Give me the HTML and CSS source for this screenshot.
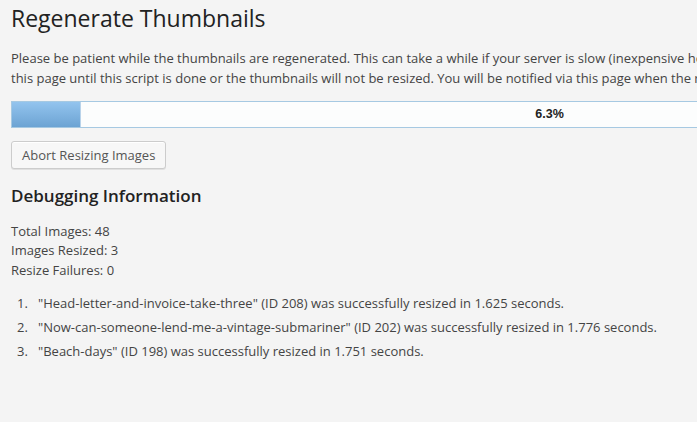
FILE: index.html
```html
<!DOCTYPE html>
<html lang="en">
<head>
    <meta charset="UTF-8">
    <title>Regenerate Thumbnails</title>
    <link rel="stylesheet" href="styles.css">
</head>
<body>

<div class="wrap regenthumbs">
    <h2>Regenerate Thumbnails</h2>

    <p>Please be patient while the thumbnails are regenerated. This can take a while if your server is slow (inexpensive hosting) or if you have many images. Do not navigate away from this page until this script is done or the thumbnails will not be resized. You will be notified via this page when the regenerating is completed.</p>

    <div class="progressbar">
        <div class="progressbar-value" style="width: 6.3%"></div>
        <div class="progressbar-label">6.3%</div>
    </div>

    <p class="stop"><button class="button" id="regenthumbs-stop">Abort Resizing Images</button></p>

    <h3 class="title">Debugging Information</h3>

    <p class="counts">
        Total Images: <span id="regenthumbs-debug-successcount">48</span><br>
        Images Resized: <span id="regenthumbs-debug-resized">3</span><br>
        Resize Failures: <span id="regenthumbs-debug-failurecount">0</span>
    </p>

    <ol id="regenthumbs-debuglist">
        <li>"Head-letter-and-invoice-take-three" (ID 208) was successfully resized in 1.625 seconds.</li>
        <li>"Now-can-someone-lend-me-a-vintage-submariner" (ID 202) was successfully resized in 1.776 seconds.</li>
        <li>"Beach-days" (ID 198) was successfully resized in 1.751 seconds.</li>
    </ol>
</div>

</body>
</html>
```

FILE: styles.css
```css
html, body {
    overflow: hidden;
}

body {
    margin: 0;
    padding: 0;
    background-color: #f4f4f4;
    color: #444;
    font-family: 'Open Sans', sans-serif;
    font-size: 13px;
    line-height: 1.5;
}

.wrap {
    width: 1077px;
    padding-left: 11px;
}

.wrap h2 {
    margin: 0;
    padding: 4px 15px 0 0;
    font-size: 23px;
    font-weight: 400;
    line-height: 29px;
    color: #222;
}

.wrap p {
    margin: 16px 0 0;
}

.progressbar {
    position: relative;
    height: 25px;
    margin-top: 13px;
    border: 1px solid #a6c9e2;
    background-color: #fcfdfd;
}

.progressbar-value {
    height: 100%;
    background: linear-gradient(#93c4ee, #6ca3d3);
    border-right: 1px solid #b9d3ea;
}

.progressbar-label {
    position: absolute;
    top: 0;
    left: 0;
    right: 0;
    text-align: center;
    font-family: 'Liberation Sans', Arial, sans-serif;
    font-weight: bold;
    font-size: 12.5px;
    line-height: 25px;
    color: #222;
}

.wrap p.stop {
    margin-top: 13px;
    line-height: 0;
}

.button {
    height: 28px;
    padding: 0 10px 1px;
    border: 1px solid #ccc;
    border-radius: 3px;
    background-color: #f7f7f7;
    box-shadow: inset 0 1px 0 #fff, 0 1px 0 rgba(0, 0, 0, 0.08);
    color: #555;
    font-family: 'Open Sans', sans-serif;
    font-size: 13px;
    line-height: 26px;
    cursor: pointer;
}

.title {
    margin: 15px 0 0;
    font-size: 17px;
    font-weight: 600;
    line-height: 1.4;
    color: #222;
}

.wrap p.counts {
    margin-top: 14px;
}

#regenthumbs-debuglist {
    margin: 11px 0 0;
    padding-left: 27px;
}

#regenthumbs-debuglist li {
    line-height: 24px;
}

#regenthumbs-debuglist li::marker {
    content: counter(list-item) ".\00a0\00a0\00a0";
}
```
